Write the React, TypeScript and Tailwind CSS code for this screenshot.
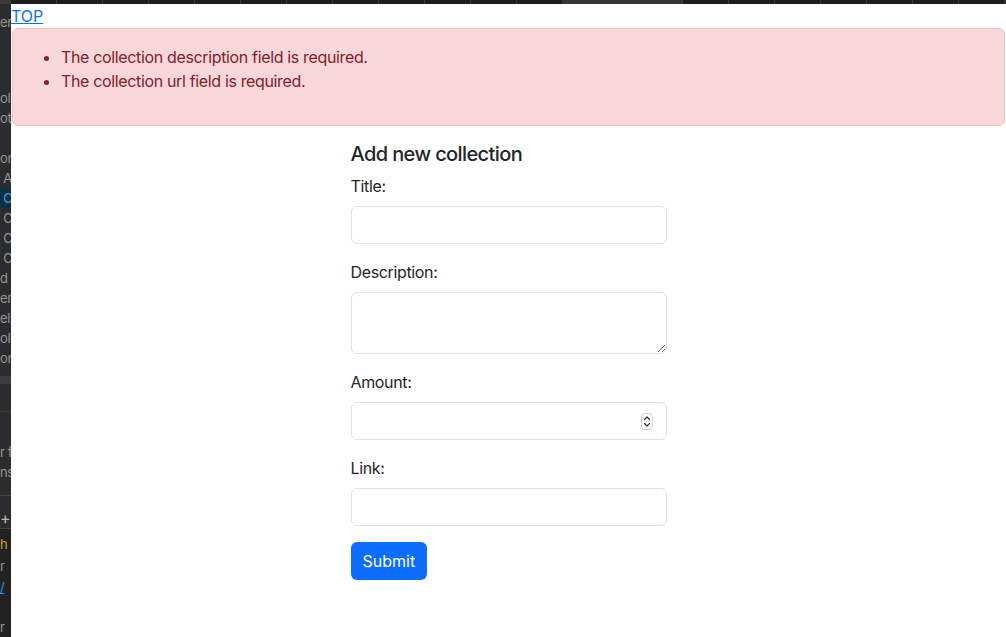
import React from "react";

const sideRows = [
  { text: "en", y: "mt-[8px]" },
  { text: "ol", y: "mt-[56px]" },
  { text: "ot", y: "mt-0" },
  { text: "on", y: "mt-[20px]" },
  { text: " A", y: "mt-0" },
  { text: " C", y: "mt-0", active: true },
  { text: " C", y: "mt-0" },
  { text: " C", y: "mt-0" },
  { text: " C", y: "mt-0" },
  { text: "d", y: "mt-0" },
  { text: "err", y: "mt-0" },
  { text: "els", y: "mt-0" },
  { text: "oll", y: "mt-0" },
  { text: "on", y: "mt-0" },
];

const tabs = Array.from({ length: 22 });

const SideStrip = () => (
  <aside className="w-[11px] shrink-0 bg-[#2b2c2e] overflow-hidden flex flex-col text-[13px] leading-[20px] text-[#959595] whitespace-pre">
    {sideRows.map((row, idx) => (
      <div
        key={row.text + idx}
        className={`${row.y} h-[20px] ${row.active ? "bg-[#0e3148] text-[#4a9fd8]" : ""}`}
      >
        {row.text}
      </div>
    ))}
    <div className="mt-[8px] h-[8px] bg-[#3b3c3e]" />
    <div className="h-[30px] border-b border-[#3d3d3d]" />
    <div className="mt-[30px] h-[20px]">r f</div>
    <div className="h-[20px]">ns</div>
    <div className="mt-[13px] border-t border-[#444] h-[20px] text-[#bbb] text-[16px] leading-[44px]">+</div>
    <div className="mt-[13px] border-t border-[#444] bg-[#222] flex-1 flex flex-col">
      <div className="mt-[5px] h-[20px] text-[#c9a227]">h</div>
      <div className="h-[20px] mt-[2px]">r</div>
      <div className="h-[20px] mt-[1px] text-[#3b8ede] underline">/</div>
      <div className="h-[20px] mt-[20px]">r</div>
    </div>
  </aside>
);

const TopStrip = () => (
  <div className="h-[4px] bg-[#1d1d1d] flex overflow-hidden">
    <div className="w-[11px] shrink-0 bg-[#3a3a3a]" />
    {tabs.map((_, idx) => (
      <div
        key={idx}
        className={`h-full shrink-0 border-r border-[#3a3a3a] ${
          idx === 12 ? "w-[120px] bg-[#353537]" : "w-[46px]"
        }`}
      />
    ))}
  </div>
);

const Field = ({ label, children }: { label: string; children: React.ReactNode }) => (
  <div className="mb-4">
    <label className="block mb-2 leading-6">{label}</label>
    {children}
  </div>
);

const inputCls =
  "block w-full h-[38px] rounded-[6px] border border-[#dee2e6] bg-white px-3 outline-none";

export default function App() {
  return (
    <div
      className="w-[1006px] h-[637px] overflow-hidden bg-white text-[16px] text-[#212529] tracking-[-0.35px]"
      style={{ fontFamily: "Inter, 'Noto Sans', sans-serif" }}
    >
      <TopStrip />
      <div className="flex h-[633px]">
        <SideStrip />
        <main className="flex-1 bg-white">
          <a href="#" className="block w-fit text-[#0d6efd] underline leading-6 tracking-normal">
            TOP
          </a>
          <div className="mx-px mb-4 rounded-[6px] border border-[#f5c2c7] bg-[#f8d7da] p-4 text-[#842029]">
            <ul className="list-disc pl-[32px] mb-4 leading-6">
              <li>The collection description field is required.</li>
              <li>The collection url field is required.</li>
            </ul>
          </div>
          <form className="w-[316px] mx-auto">
            <h5 className="text-[20px] font-medium leading-[24px] mb-2 tracking-[-0.6px]">
              Add new collection
            </h5>
            <Field label="Title:">
              <input type="text" className={inputCls} />
            </Field>
            <Field label="Description:">
              <textarea className="block w-full h-[62px] rounded-[6px] border border-[#dee2e6] bg-white px-3 py-1.5 outline-none" />
            </Field>
            <Field label="Amount:">
              <div className="relative">
                <input type="text" className={inputCls} />
                <div className="absolute right-[14px] top-[11px] w-[12px] h-[17px] rounded-[4px] border border-[#d4d4d4] bg-white flex items-center justify-center">
                  <svg width="8" height="13" viewBox="0 0 8 13" fill="none" stroke="#333" strokeWidth="1.2" strokeLinecap="round" strokeLinejoin="round">
                    <path d="M1.5 4.5 L4 2 L6.5 4.5" />
                    <path d="M1.5 8.5 L4 11 L6.5 8.5" />
                  </svg>
                </div>
              </div>
            </Field>
            <Field label="Link:">
              <input type="text" className={inputCls} />
            </Field>
            <button
              type="button"
              className="h-[38px] px-3 rounded-[6px] bg-[#0d6efd] text-white leading-6 tracking-normal"
            >
              Submit
            </button>
          </form>
        </main>
      </div>
    </div>
  );
}
